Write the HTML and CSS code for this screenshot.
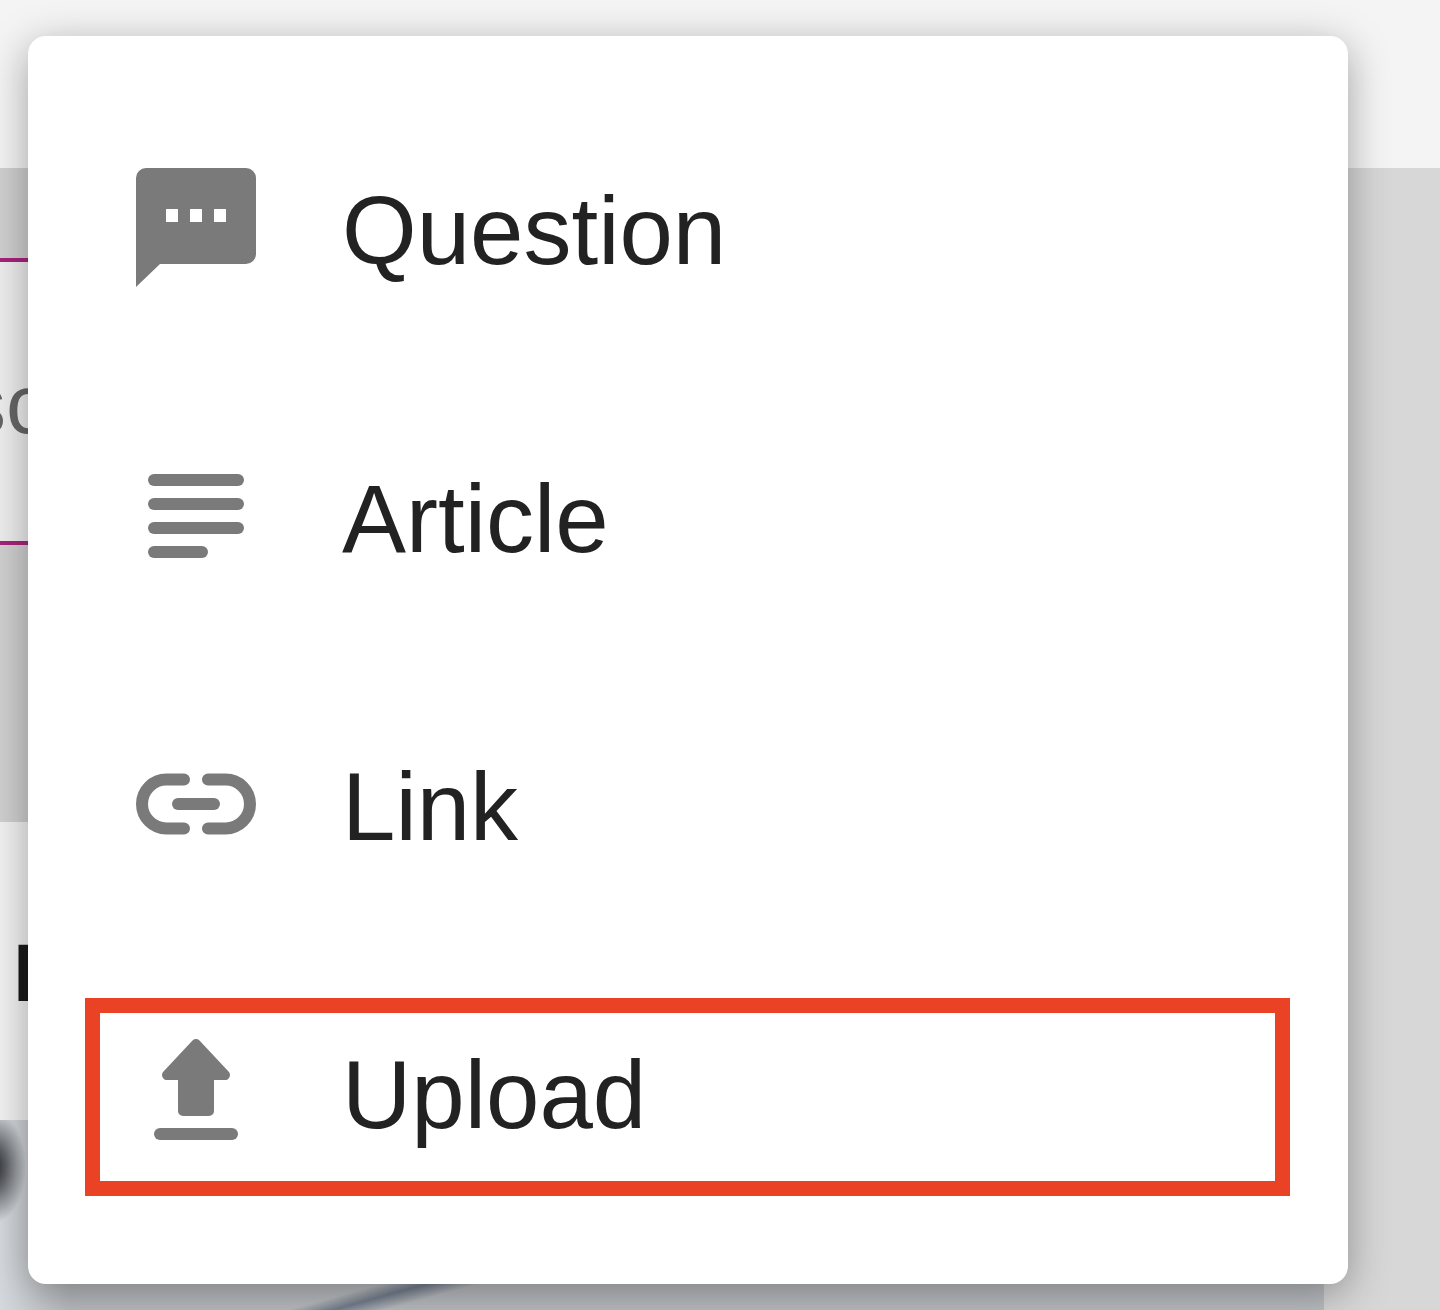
FILE: index.html
```html
<!DOCTYPE html>
<html lang="en">
<head>
<meta charset="utf-8">
<title>New post menu</title>
<link rel="stylesheet" href="styles.css">
</head>
<body>
<div class="page">
  <header class="topbar"></header>
  <div class="content">
    <main class="feed">
      <div class="dim-band dim-band-short"></div>
      <div class="rule"></div>
      <div class="tab-band"><span class="tab-text">sc</span></div>
      <div class="rule"></div>
      <div class="dim-band dim-band-tall"></div>
      <div class="title-band"><span class="title-text">N</span></div>
      <div class="photo"></div>
    </main>
    <aside class="rail"></aside>
  </div>

  <nav class="menu">
    <a class="menu-item">
      <svg class="icon" viewBox="0 0 24 24"><path d="M2 0H22a2 2 0 0 1 2 2V17.2a2 2 0 0 1-2 2H4.8L0 23.8V2a2 2 0 0 1 2-2z"/><rect class="dot" x="6" y="8.2" width="2.4" height="2.6"/><rect class="dot" x="10.8" y="8.2" width="2.4" height="2.6"/><rect class="dot" x="15.6" y="8.2" width="2.4" height="2.6"/></svg>
      <span class="label">Question</span>
    </a>
    <a class="menu-item">
      <svg class="icon" viewBox="0 0 24 24"><rect x="2.4" y="3.6" width="19.2" height="2.4" rx="1.2"/><rect x="2.4" y="8.4" width="19.2" height="2.4" rx="1.2"/><rect x="2.4" y="13.2" width="19.2" height="2.4" rx="1.2"/><rect x="2.4" y="18" width="12" height="2.4" rx="1.2"/></svg>
      <span class="label">Article</span>
    </a>
    <a class="menu-item">
      <svg class="icon icon-stroke" viewBox="0 0 24 24"><path d="M9.6 7.1H6.1a4.9 4.9 0 0 0 0 9.8H9.6"/><path d="M14.4 7.1H17.9a4.9 4.9 0 0 1 0 9.8H14.4"/><path d="M8.4 12H15.6"/></svg>
      <span class="label">Link</span>
    </a>
    <a class="menu-item menu-item-marked">
      <svg class="icon" viewBox="0 0 24 24"><path d="M11.3 1.7a1 1 0 0 1 1.4 0L18.5 7.9a1 1 0 0 1-.7 1.7H15.6V15.8a1 1 0 0 1-1 1H9.4a1 1 0 0 1-1-1V9.6H6.2a1 1 0 0 1-.7-1.7z"/><rect x="3.6" y="19.2" width="16.8" height="2.4" rx="1.2"/></svg>
      <span class="label">Upload</span>
      <span class="marker"></span>
    </a>
  </nav>
</div>
</body>
</html>
```

FILE: styles.css
```css
* {
  box-sizing: border-box;
}

html,
body {
  margin: 0;
  padding: 0;
}

body {
  font-family: "Liberation Sans", Arial, sans-serif;
  background: #f3f3f3;
}

.page {
  position: relative;
  width: 1440px;
  height: 1310px;
  overflow: hidden;
  display: flex;
  flex-direction: column;
}

.topbar {
  flex: 0 0 168px;
  background: #f4f4f4;
}

.content {
  flex: 1;
  display: flex;
  min-height: 0;
}

.feed {
  flex: 0 0 1324px;
  display: flex;
  flex-direction: column;
}

.rail {
  flex: 1;
  background: #d7d7d7;
}

.dim-band {
  background: #d0d0d0;
}

.dim-band-short {
  flex: 0 0 90px;
}

.dim-band-tall {
  flex: 0 0 277px;
}

.rule {
  flex: 0 0 4px;
  background: #a8227c;
}

.tab-band {
  flex: 0 0 279px;
  display: flex;
  align-items: center;
  padding-top: 4px;
  background: #eeeeee;
  overflow: hidden;
}

.tab-text {
  margin-left: -36px;
  font-size: 84px;
  line-height: 1;
  color: #666;
}

.title-band {
  flex: 0 0 298px;
  padding: 110px 0 0 13px;
  background: #f2f2f2;
}

.title-text {
  display: block;
  font-size: 82px;
  font-weight: 700;
  line-height: 1;
  color: #1a1a1a;
}

.photo {
  flex: 1;
  background:
    radial-gradient(ellipse 32px 56px at -6px 47px, #26272a 0%, rgba(60, 62, 66, .75) 40%, rgba(120, 125, 130, 0) 100%),
    linear-gradient(164.5deg, rgba(110, 122, 142, 0) 260px, #75808f 272px, rgba(110, 122, 142, 0) 286px),
    linear-gradient(90deg, #d6dade 0, #bcbfc2 70px, #bcbfc2 100%);
}

.menu {
  position: absolute;
  left: 28px;
  top: 36px;
  width: 1320px;
  height: 1248px;
  padding: 48px 0;
  display: flex;
  flex-direction: column;
  background: #fff;
  border-radius: 18px;
  box-shadow: 0 10px 40px rgba(0, 0, 0, .34);
}

.menu-item {
  position: relative;
  flex: 0 0 288px;
  display: flex;
  align-items: center;
  gap: 86px;
  padding-left: 108px;
}

.icon {
  flex: 0 0 120px;
  width: 120px;
  height: 120px;
  fill: #7a7a7a;
}

.icon .dot {
  fill: #fff;
}

.icon-stroke {
  fill: none;
  stroke: #7a7a7a;
  stroke-width: 2.4;
  stroke-linecap: round;
}

.label {
  padding-top: 6px;
  font-size: 96px;
  color: #222;
}

.marker {
  position: absolute;
  left: 57px;
  right: 58px;
  top: 50px;
  bottom: 40px;
  border: 15px solid #e94225;
}
```
